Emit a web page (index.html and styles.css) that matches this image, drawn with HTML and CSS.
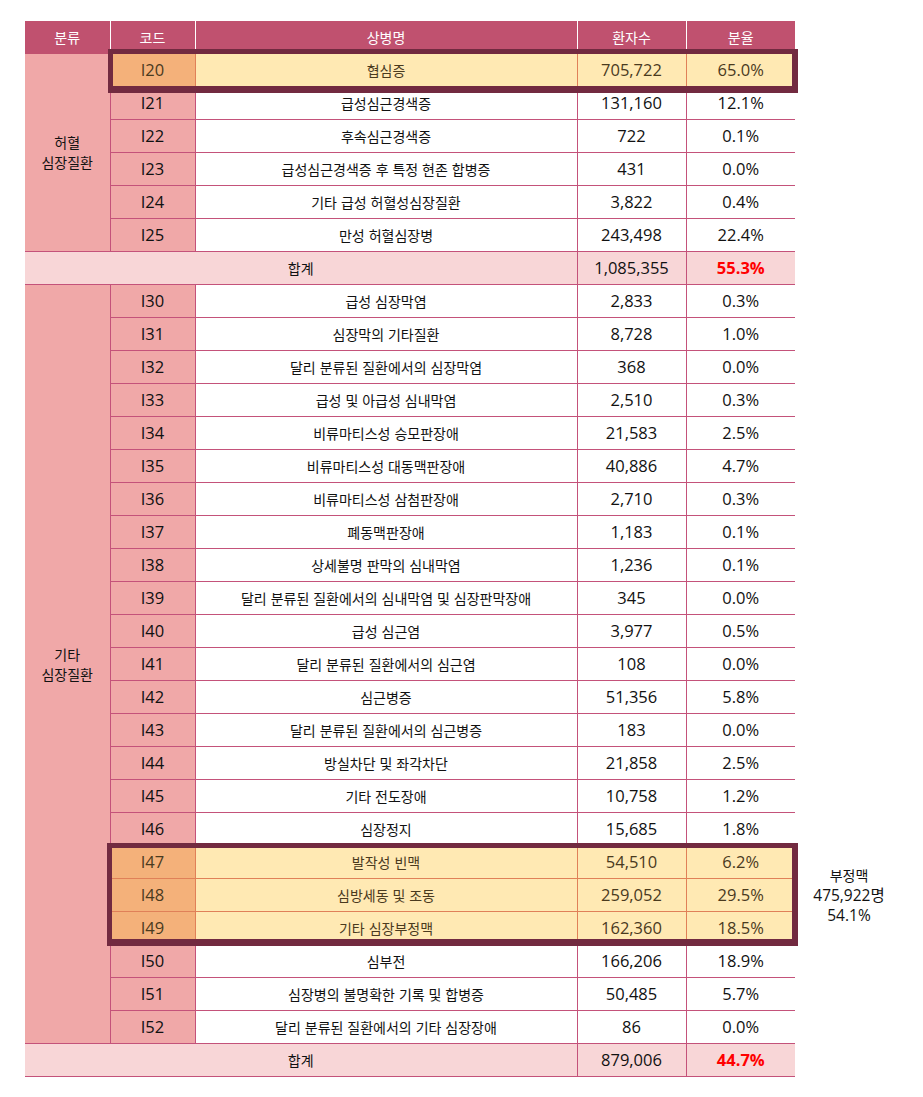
FILE: index.html
```html
<!DOCTYPE html>
<html lang="ko">
<head>
<meta charset="utf-8">
<title>심장질환 환자수</title>
<link rel="stylesheet" href="styles.css">
</head>
<body>
<div class="page">
  <div class="sheet">
    <table class="stats">
      <colgroup>
        <col class="c-cat"><col class="c-code"><col class="c-name"><col class="c-num"><col class="c-pct">
      </colgroup>
      <thead>
        <tr><th>분류</th><th>코드</th><th>상병명</th><th>환자수</th><th>분율</th></tr>
      </thead>
      <tbody>
        <tr class="hl"><td class="cat" rowspan="6">허혈<br>심장질환</td><td class="code">I20</td><td class="name">협심증</td><td class="num">705,722</td><td class="pct">65.0%</td></tr>
        <tr><td class="code">I21</td><td class="name">급성심근경색증</td><td class="num">131,160</td><td class="pct">12.1%</td></tr>
        <tr><td class="code">I22</td><td class="name">후속심근경색증</td><td class="num">722</td><td class="pct">0.1%</td></tr>
        <tr><td class="code">I23</td><td class="name">급성심근경색증 후 특정 현존 합병증</td><td class="num">431</td><td class="pct">0.0%</td></tr>
        <tr><td class="code">I24</td><td class="name">기타 급성 허혈성심장질환</td><td class="num">3,822</td><td class="pct">0.4%</td></tr>
        <tr><td class="code">I25</td><td class="name">만성 허혈심장병</td><td class="num">243,498</td><td class="pct">22.4%</td></tr>
        <tr class="sum"><td class="name" colspan="3">합계</td><td class="num">1,085,355</td><td class="pct red">55.3%</td></tr>
        <tr><td class="cat" rowspan="23">기타<br>심장질환</td><td class="code">I30</td><td class="name">급성 심장막염</td><td class="num">2,833</td><td class="pct">0.3%</td></tr>
        <tr><td class="code">I31</td><td class="name">심장막의 기타질환</td><td class="num">8,728</td><td class="pct">1.0%</td></tr>
        <tr><td class="code">I32</td><td class="name">달리 분류된 질환에서의 심장막염</td><td class="num">368</td><td class="pct">0.0%</td></tr>
        <tr><td class="code">I33</td><td class="name">급성 및 아급성 심내막염</td><td class="num">2,510</td><td class="pct">0.3%</td></tr>
        <tr><td class="code">I34</td><td class="name">비류마티스성 승모판장애</td><td class="num">21,583</td><td class="pct">2.5%</td></tr>
        <tr><td class="code">I35</td><td class="name">비류마티스성 대동맥판장애</td><td class="num">40,886</td><td class="pct">4.7%</td></tr>
        <tr><td class="code">I36</td><td class="name">비류마티스성 삼첨판장애</td><td class="num">2,710</td><td class="pct">0.3%</td></tr>
        <tr><td class="code">I37</td><td class="name">폐동맥판장애</td><td class="num">1,183</td><td class="pct">0.1%</td></tr>
        <tr><td class="code">I38</td><td class="name">상세불명 판막의 심내막염</td><td class="num">1,236</td><td class="pct">0.1%</td></tr>
        <tr><td class="code">I39</td><td class="name">달리 분류된 질환에서의 심내막염 및 심장판막장애</td><td class="num">345</td><td class="pct">0.0%</td></tr>
        <tr><td class="code">I40</td><td class="name">급성 심근염</td><td class="num">3,977</td><td class="pct">0.5%</td></tr>
        <tr><td class="code">I41</td><td class="name">달리 분류된 질환에서의 심근염</td><td class="num">108</td><td class="pct">0.0%</td></tr>
        <tr><td class="code">I42</td><td class="name">심근병증</td><td class="num">51,356</td><td class="pct">5.8%</td></tr>
        <tr><td class="code">I43</td><td class="name">달리 분류된 질환에서의 심근병증</td><td class="num">183</td><td class="pct">0.0%</td></tr>
        <tr><td class="code">I44</td><td class="name">방실차단 및 좌각차단</td><td class="num">21,858</td><td class="pct">2.5%</td></tr>
        <tr><td class="code">I45</td><td class="name">기타 전도장애</td><td class="num">10,758</td><td class="pct">1.2%</td></tr>
        <tr><td class="code">I46</td><td class="name">심장정지</td><td class="num">15,685</td><td class="pct">1.8%</td></tr>
        <tr class="hl"><td class="code">I47</td><td class="name">발작성 빈맥</td><td class="num">54,510</td><td class="pct">6.2%</td></tr>
        <tr class="hl"><td class="code">I48</td><td class="name">심방세동 및 조동</td><td class="num">259,052</td><td class="pct">29.5%</td></tr>
        <tr class="hl"><td class="code">I49</td><td class="name">기타 심장부정맥</td><td class="num">162,360</td><td class="pct">18.5%</td></tr>
        <tr><td class="code">I50</td><td class="name">심부전</td><td class="num">166,206</td><td class="pct">18.9%</td></tr>
        <tr><td class="code">I51</td><td class="name">심장병의 불명확한 기록 및 합병증</td><td class="num">50,485</td><td class="pct">5.7%</td></tr>
        <tr><td class="code">I52</td><td class="name">달리 분류된 질환에서의 기타 심장장애</td><td class="num">86</td><td class="pct">0.0%</td></tr>
        <tr class="sum"><td class="name" colspan="3">합계</td><td class="num">879,006</td><td class="pct red">44.7%</td></tr>
      </tbody>
    </table>
    <div class="mark mark-top"></div>
    <div class="mark mark-arrhythmia"></div>
    <div class="note">
      <div class="note-line">부정맥</div>
      <div class="note-line latin">475,922명</div>
      <div class="note-line latin">54.1%</div>
    </div>
  </div>
</div>
</body>
</html>
```
FILE: styles.css
```css
:root {
  --line: #c4527a;
  --head: #c0516f;
  --pink: #f0a8a8;
  --sum: #f8d6d7;
  --hl-fill: #ffe9b3;
  --hl-code: #f4b17a;
  --hl-line: #e08058;
  --hl-text: #4a3a1e;
  --mark: #722a40;
}

html, body {
  margin: 0;
  background: #fff;
}

body {
  font-family: "Noto Sans CJK KR", "Open Sans", sans-serif;
  font-size: 14px;
  color: #111;
}

.page {
  padding: 21px 0 0 25px;
}

.sheet {
  position: relative;
  width: 770px;
}

.stats {
  width: 770px;
  border-collapse: collapse;
  table-layout: fixed;
  border-top: hidden;
  border-left: hidden;
  border-right: hidden;
}

.c-cat { width: 85px; }
.c-code { width: 85px; }
.c-name { width: 382px; }
.c-num { width: 109px; }
.c-pct { width: 109px; }

.stats th,
.stats td {
  padding: 0;
  text-align: center;
  vertical-align: middle;
  line-height: 20px;
  border: 1px solid var(--line);
}

.stats thead tr { height: 32px; }
.stats tbody tr { height: 33px; }

.stats th {
  background: var(--head);
  color: #fff;
  font-weight: 400;
  border-color: var(--head) #fff;
}

.cat,
.code {
  background: var(--pink);
}

.code,
.num,
.pct,
.latin {
  font-family: "Open Sans", "Noto Sans CJK KR", sans-serif;
  font-size: 16.5px;
}

.sum td {
  background: var(--sum);
}

.red {
  color: #ff0000;
  font-weight: 700;
}

.hl .code,
.hl .name,
.hl .num,
.hl .pct {
  background: var(--hl-fill);
  color: var(--hl-text);
  border-color: var(--hl-line);
}

.hl .code {
  background: var(--hl-code);
}

.mark {
  position: absolute;
  box-sizing: border-box;
  border-style: solid;
  border-color: var(--mark);
  border-width: 5px 6px 7px 5px;
  pointer-events: none;
}

.mark-top {
  left: 83px;
  top: 28px;
  width: 690px;
  height: 44px;
}

.mark-arrhythmia {
  left: 82px;
  top: 822px;
  width: 691px;
  height: 103px;
}

.note {
  position: absolute;
  left: 779px;
  top: 844px;
  width: 90px;
  text-align: center;
  color: #111;
}

.note-line {
  height: 20px;
  line-height: 20px;
}

.note .latin {
  font-size: 15.5px;
}
```
